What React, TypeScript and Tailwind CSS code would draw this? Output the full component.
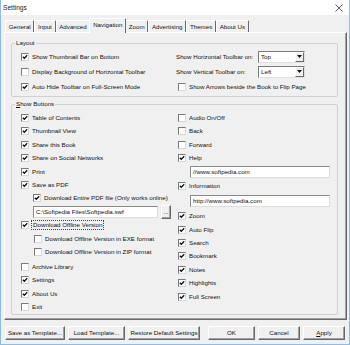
import type { ReactNode } from 'react';

const tabs = ['General', 'Input', 'Advanced', 'Navigation', 'Zoom', 'Advertising', 'Themes', 'About Us'];

function Check({ checked }: { checked?: boolean }) {
  return (
    <span className="w-[8px] h-[8px] shrink-0 bg-white border border-t-[#7a7a7a] border-l-[#7a7a7a] border-r-[#d8d8d8] border-b-[#d8d8d8] flex items-center justify-center">
      {checked && (
        <svg width="6" height="6" viewBox="0 0 6 6">
          <path d="M0.8 2.8 L2.3 4.3 L5.2 1.2" fill="none" stroke="#111" strokeWidth="1.3" />
        </svg>
      )}
    </span>
  );
}

interface RowProps {
  label: ReactNode;
  checked?: boolean;
  className?: string;
  focus?: boolean;
}

function CheckRow({ label, checked, className = 'h-[13.4px]', focus }: RowProps) {
  return (
    <div className={`flex items-center ${className}`}>
      <Check checked={checked} />
      <span
        className={
          focus
            ? 'ml-[2px] px-[1px] border border-dotted border-[#444] leading-[8px]'
            : 'ml-[3px] leading-[8px]'
        }
      >
        {label}
      </span>
    </div>
  );
}

function TextBox({ value, className }: { value: string; className: string }) {
  return (
    <div
      className={`h-[12px] bg-white border border-t-[#8a8a8a] border-l-[#8a8a8a] border-r-[#dcdcdc] border-b-[#dcdcdc] flex items-center pl-[2px] ${className}`}
    >
      {value}
    </div>
  );
}

function Select({ value }: { value: string }) {
  return (
    <div className="w-[47px] h-[12px] bg-white border border-t-[#7a7a7a] border-l-[#7a7a7a] border-r-[#e0e0e0] border-b-[#e0e0e0] flex items-center">
      <span className="flex-1 pl-[2px]">{value}</span>
      <span className="w-[9px] h-[10px] bg-[#f0f0f0] border border-t-white border-l-white border-r-[#6a6a6a] border-b-[#6a6a6a] flex items-center justify-center">
        <svg width="5" height="3" viewBox="0 0 5 3">
          <path d="M0 0 H5 L2.5 3 Z" fill="#111" />
        </svg>
      </span>
    </div>
  );
}

function Button({ children, className }: { children: ReactNode; className: string }) {
  return (
    <div
      className={`h-[14px] flex items-center justify-center bg-[#f0f0f0] border border-t-white border-l-white border-r-[#696969] border-b-[#696969] shadow-[inset_-1px_-1px_0_#a0a0a0] ${className}`}
    >
      {children}
    </div>
  );
}

export default function App() {
  return (
    <div className="w-[350px] h-[345px] bg-[#f0f0f0] border-x border-b border-[#8fbbe8] flex flex-col font-['Liberation_Sans',Arial,sans-serif] text-[6.2px] text-[#111] overflow-hidden">
      {/* Title bar */}
      <div className="h-[15px] bg-white flex items-center justify-between pl-[2px] pr-[6px] shrink-0">
        <span className="text-[6.6px] text-[#222]">Settings</span>
        <svg width="8" height="8" viewBox="0 0 8 8">
          <path d="M0.5 0.5 L7.5 7.5 M7.5 0.5 L0.5 7.5" stroke="#333" strokeWidth="0.8" />
        </svg>
      </div>

      {/* Tabs */}
      <div className="h-[17px] pt-[3px] pl-[4px] flex items-end shrink-0">
        {tabs.map((t) => {
          const active = t === 'Navigation';
          return (
            <div
              key={t}
              className={
                active
                  ? 'h-[15px] -mx-[1px] relative z-10 px-[2.7px] pb-[2px] flex items-center bg-[#f0f0f0] border-t border-l border-r border-t-white border-l-white border-r-[#696969] rounded-t-[1px] -mb-[1px]'
                  : 'h-[12px] px-[2.7px] flex items-center border-t border-l border-r border-t-white border-l-white border-r-[#696969] rounded-t-[1px]'
              }
            >
              {t}
            </div>
          );
        })}
      </div>

      {/* Tab panel */}
      <div className="ml-[3px] mr-[2px] h-[288px] shrink-0 border border-t-white border-l-white border-r-[#696969] border-b-[#696969] shadow-[inset_-1px_-1px_0_#a0a0a0] pl-[6px] pr-[8px] pt-[6px]">
        {/* Layout */}
        <fieldset className="border border-[#d0d0d0] rounded-[2px] h-[58px]">
          <legend className="ml-[3px] px-[1px] leading-[8px]">Layout</legend>
          <div className="grid grid-cols-[155px_1fr] pl-[9px] pt-[2px]">
            <div className="flex flex-col">
              <CheckRow checked label="Show Thumbnail Bar on Bottom" className="h-[15px]" />
              <CheckRow label="Display Background of Horizontal Toolbar" className="h-[15px]" />
              <CheckRow checked label="Auto Hide Toolbar on Full-Screen Mode" className="h-[15px]" />
            </div>
            <div className="flex flex-col">
              <div className="h-[15px] flex items-center">
                <span className="w-[82px]">Show Horizontal Toolbar on:</span>
                <Select value="Top" />
              </div>
              <div className="h-[15px] flex items-center">
                <span className="w-[82px]">Show Vertical Toolbar on:</span>
                <Select value="Left" />
              </div>
              <CheckRow label="Show Arrows beside the Book to Flip Page" className="h-[15px] pl-[2px]" />
            </div>
          </div>
        </fieldset>

        {/* Show Buttons */}
        <fieldset className="mt-[3px] border border-[#d0d0d0] rounded-[2px] h-[215px]">
          <legend className="ml-[3px] px-[1px] leading-[8px]">
            <span className="underline">S</span>how Buttons
          </legend>
          <div className="grid grid-cols-[157px_1fr] pl-[9px] pt-[3.3px]">
            <div className="flex flex-col">
              <CheckRow checked label="Table of Contents" />
              <CheckRow checked label="Thumbnail View" />
              <CheckRow checked label="Share this Book" />
              <CheckRow checked label="Share on Social Networks" />
              <CheckRow checked label="Print" />
              <CheckRow checked label="Save as PDF" />
              <CheckRow checked label="Download Entire PDF file (Only works online)" className="h-[13.4px] pl-[12px]" />
              <div className="h-[13.4px] flex items-center pl-[12px]">
                <TextBox value="C:\Softpedia Files\Softpedia.swf" className="w-[125px]" />
                <Button className="ml-[3px] w-[10px] h-[11px]">...</Button>
              </div>
              <CheckRow checked focus label="Download Offline Version" />
              <CheckRow label="Download Offline Version in EXE format" className="h-[13.4px] pl-[13px]" />
              <CheckRow label="Download Offline Version in ZIP format" className="h-[13.4px] pl-[13px]" />
              <CheckRow label="Archive Library" className="h-[13.4px] mt-[1.5px]" />
              <CheckRow checked label="Settings" />
              <CheckRow checked label="About Us" />
              <CheckRow label="Exit" />
            </div>
            <div className="flex flex-col">
              <CheckRow label="Audio On/Off" />
              <CheckRow label="Back" />
              <CheckRow label="Forward" />
              <CheckRow checked label="Help" />
              <div className="h-[14px] flex items-center pl-[12px]">
                <TextBox value="//www.softpedia.com" className="w-[140px]" />
              </div>
              <CheckRow checked label="Information" className="h-[14px]" />
              <div className="h-[16px] flex items-center pl-[12px]">
                <TextBox value="http://www.softpedia.com" className="w-[140px]" />
              </div>
              <CheckRow checked label="Zoom" className="h-[14px]" />
              <CheckRow checked label="Auto Flip" />
              <CheckRow checked label="Search" />
              <CheckRow checked label="Bookmark" />
              <CheckRow checked label="Notes" />
              <CheckRow checked label="Highlights" />
              <CheckRow checked label="Full Screen" />
            </div>
          </div>
        </fieldset>
      </div>

      {/* Bottom buttons */}
      <div className="mt-[6px] pl-[4px] flex items-center shrink-0">
        <Button className="w-[60px]">Save as Template...</Button>
        <Button className="ml-[3px] w-[57px]">Load Template...</Button>
        <Button className="ml-[3px] w-[72px]">Restore Default Settings</Button>
        <Button className="ml-[8px] w-[47px]">OK</Button>
        <Button className="ml-[3px] w-[42px]">Cancel</Button>
        <Button className="ml-[3px] w-[42px]">
          <span className="underline">A</span>pply
        </Button>
      </div>
    </div>
  );
}
